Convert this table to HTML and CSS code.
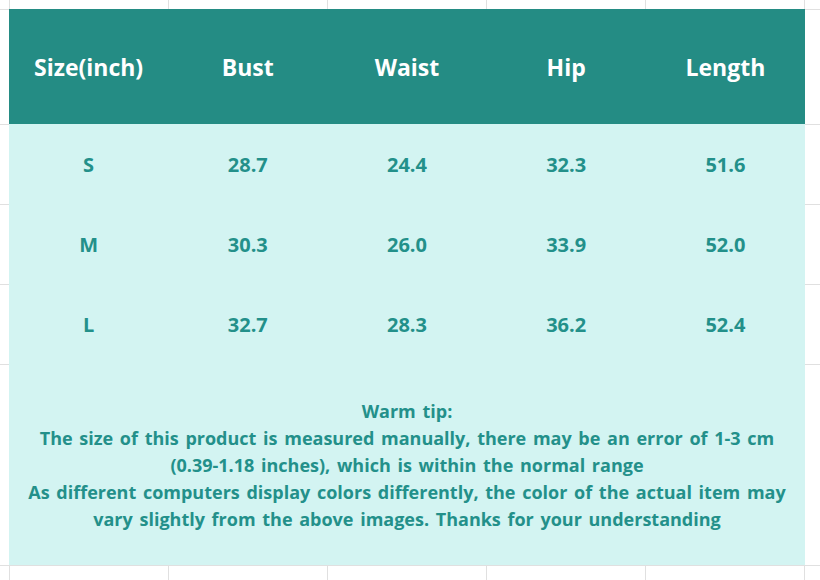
FILE: index.html
```html
<!DOCTYPE html>
<html>
<head>
<meta charset="utf-8">
<link rel="stylesheet" href="styles.css">
</head>
<body>
<div class="sheet">
  <div class="chart">
    <div class="row head">
      <div class="cell">Size(inch)</div>
      <div class="cell">Bust</div>
      <div class="cell">Waist</div>
      <div class="cell">Hip</div>
      <div class="cell">Length</div>
    </div>
    <div class="row data">
      <div class="cell">S</div>
      <div class="cell">28.7</div>
      <div class="cell">24.4</div>
      <div class="cell">32.3</div>
      <div class="cell">51.6</div>
    </div>
    <div class="row data">
      <div class="cell">M</div>
      <div class="cell">30.3</div>
      <div class="cell">26.0</div>
      <div class="cell">33.9</div>
      <div class="cell">52.0</div>
    </div>
    <div class="row data">
      <div class="cell">L</div>
      <div class="cell">32.7</div>
      <div class="cell">28.3</div>
      <div class="cell">36.2</div>
      <div class="cell">52.4</div>
    </div>
    <div class="tip">
      <p>Warm tip:<br>The size of this product is measured manually, there may be an error of 1-3 cm<br>(0.39-1.18 inches), which is within the normal range<br>As different computers display colors differently, the color of the actual item may<br>vary slightly from the above images. Thanks for your understanding</p>
    </div>
  </div>
</div>
</body>
</html>
```
FILE: styles.css
```css
html, body {
  margin: 0;
  padding: 0;
}
body {
  width: 820px;
  height: 580px;
  overflow: hidden;
  background-color: #ffffff;
  background-image:
    repeating-linear-gradient(to right, #e0e0e0 0 1px, transparent 1px 159px),
    linear-gradient(#e0e0e0, #e0e0e0),
    linear-gradient(#e0e0e0, #e0e0e0),
    linear-gradient(#e0e0e0, #e0e0e0),
    linear-gradient(#e0e0e0, #e0e0e0),
    linear-gradient(#e0e0e0, #e0e0e0),
    linear-gradient(#e0e0e0, #e0e0e0);
  background-repeat: no-repeat;
  background-position:
    9px 0,
    0 9px,
    0 124px,
    0 204px,
    0 284px,
    0 364px,
    0 565px;
  background-size:
    820px 580px,
    820px 1px,
    820px 1px,
    820px 1px,
    820px 1px,
    820px 1px,
    820px 1px;
  font-family: "Open Sans", "Noto Sans", sans-serif;
}
.sheet {
  padding: 9px 0 0 9px;
}
.chart {
  width: 796px;
  background: #d3f4f2;
}
.row {
  display: grid;
  grid-template-columns: repeat(5, 1fr);
}
.cell {
  display: flex;
  align-items: center;
  justify-content: center;
}
.head {
  height: 115px;
  background: #248c84;
  color: #ffffff;
  font-size: 23px;
  font-weight: 700;
}
.data {
  height: 80px;
  color: #23908a;
  font-size: 20px;
  font-weight: 700;
}
.data .cell {
  padding-top: 1px;
}
.tip {
  height: 201px;
  display: flex;
  align-items: center;
  justify-content: center;
  color: #23908a;
  font-size: 18px;
  font-weight: 700;
  word-spacing: 2px;
  text-align: center;
  line-height: 27px;
}
.tip p {
  margin: 0;
  padding-top: 2px;
}
```
